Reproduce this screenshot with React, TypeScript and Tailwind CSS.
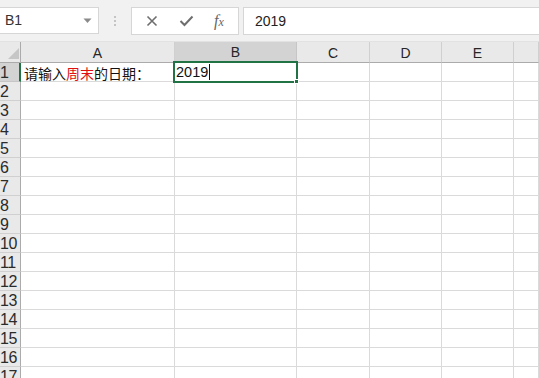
import React from 'react';

const cols = ['A', 'B', 'C', 'D', 'E', ''];
const rows = Array.from({ length: 17 }, (_, i) => i + 1);

const font = { fontFamily: '"Liberation Sans", "Noto Sans CJK SC", sans-serif' };

function Toolbar() {
  return (
    <div className="h-[42px] bg-[#f1f1f1] flex items-start pt-[7px] border-b border-[#e2e2e2]">
      <div className="w-[99px] h-[27px] bg-white border border-[#d6d6d6] border-l-0 flex items-center justify-between pl-[5px] pr-[6px]">
        <span className="text-[14px] text-[#333]">B1</span>
        <svg width="9" height="6" viewBox="0 0 9 6">
          <path d="M0.5 0.5 L8.5 0.5 L4.5 5 Z" fill="#8a8a8a" />
        </svg>
      </div>
      <div className="w-[32px] h-[27px] flex items-center justify-center">
        <svg width="4" height="12" viewBox="0 0 4 12">
          <circle cx="2" cy="2" r="1" fill="#b5b5b5" />
          <circle cx="2" cy="6" r="1" fill="#b5b5b5" />
          <circle cx="2" cy="10" r="1" fill="#b5b5b5" />
        </svg>
      </div>
      <div className="w-[108px] h-[28px] bg-white border border-[#d6d6d6] flex items-center justify-around px-[4px]">
        <svg width="12" height="12" viewBox="0 0 12 12">
          <path d="M1.5 1.5 L10.5 10.5 M10.5 1.5 L1.5 10.5" stroke="#6e6e6e" strokeWidth="1.6" />
        </svg>
        <svg width="15" height="12" viewBox="0 0 15 12">
          <path d="M1.5 6 L5.5 10 L13.5 1.5" stroke="#6e6e6e" strokeWidth="2" fill="none" />
        </svg>
        <span className="text-[16px] italic text-[#666] leading-none" style={{ fontFamily: '"Liberation Serif", serif' }}>
          f<span className="text-[12px]">x</span>
        </span>
      </div>
      <div className="ml-[4px] flex-1 h-[28px] bg-white border border-[#d6d6d6] border-r-0 flex items-center pl-[11px]">
        <span className="text-[14px] text-[#222]">2019</span>
      </div>
    </div>
  );
}

function Grid() {
  return (
    <div className="grid grid-cols-[21px_154px_122px_73px_72px_72px_1fr] bg-white">
      <div className="h-[21px] bg-[#e9e9e9] border-r border-b border-[#ababab] relative overflow-hidden">
        <svg className="absolute left-[8px] top-[6px]" width="11" height="11" viewBox="0 0 11 11">
          <path d="M11 0 L11 11 L0 11 Z" fill="#c6c6c6" />
        </svg>
      </div>
      {cols.map((c, i) => (
        <div
          key={'h' + i}
          className={
            i === 1
              ? 'h-[21px] bg-[#d3d3d3] border-r border-[#c6c6c6] border-b-2 border-b-[#217346] flex items-end justify-center text-[14px] text-[#262626] leading-[18px]'
              : 'h-[21px] bg-[#e9e9e9] border-r border-[#d0d0d0] border-b border-b-[#ababab] flex items-end justify-center text-[14px] text-[#262626] leading-[18px]'
          }
        >
          {c}
        </div>
      ))}
      {rows.map((r) => (
        <React.Fragment key={r}>
          <div
            className={
              r === 1
                ? 'h-[19px] bg-[#d3d3d3] border-r-2 border-r-[#217346] border-b border-b-[#c6c6c6] overflow-hidden'
                : 'h-[19px] bg-[#e9e9e9] border-r border-r-[#ababab] border-b border-b-[#d0d0d0] overflow-hidden'
            }
          >
            <div className="text-left text-[16px] leading-[20px] text-[#2b2b2b] tracking-[-0.5px]">{r}</div>
          </div>
          {cols.map((c, i) => (
            <div key={c + i} className="h-[19px] border-r border-b border-[#dadada] relative">
              {r === 1 && i === 0 && (
                <div
                  className="absolute left-[3px] top-[1px] text-[14px] leading-[19px] whitespace-nowrap text-[#111]"
                  style={{ fontFamily: '"Noto Sans CJK SC", sans-serif' }}
                >
                  请输入<span className="text-[#e01010]">周末</span>的日期：
                </div>
              )}
              {r === 1 && i === 1 && (
                <div className="absolute -left-[2px] -top-[2px] w-[125px] h-[22px] border-2 border-[#217346] z-10">
                  <div className="flex items-end h-full pl-[1px] pb-[1px] text-[14.5px] leading-[16px] text-[#111]">
                    2019<span className="inline-block w-[1px] h-[16px] bg-[#111] ml-[1px]" />
                  </div>
                  <div className="absolute -right-[3px] -bottom-[3px] w-[5px] h-[5px] bg-[#217346] border border-white" />
                </div>
              )}
            </div>
          ))}
        </React.Fragment>
      ))}
    </div>
  );
}

export default function App() {
  return (
    <div className="w-[539px] h-[378px] overflow-hidden bg-white" style={font}>
      <Toolbar />
      <Grid />
    </div>
  );
}
